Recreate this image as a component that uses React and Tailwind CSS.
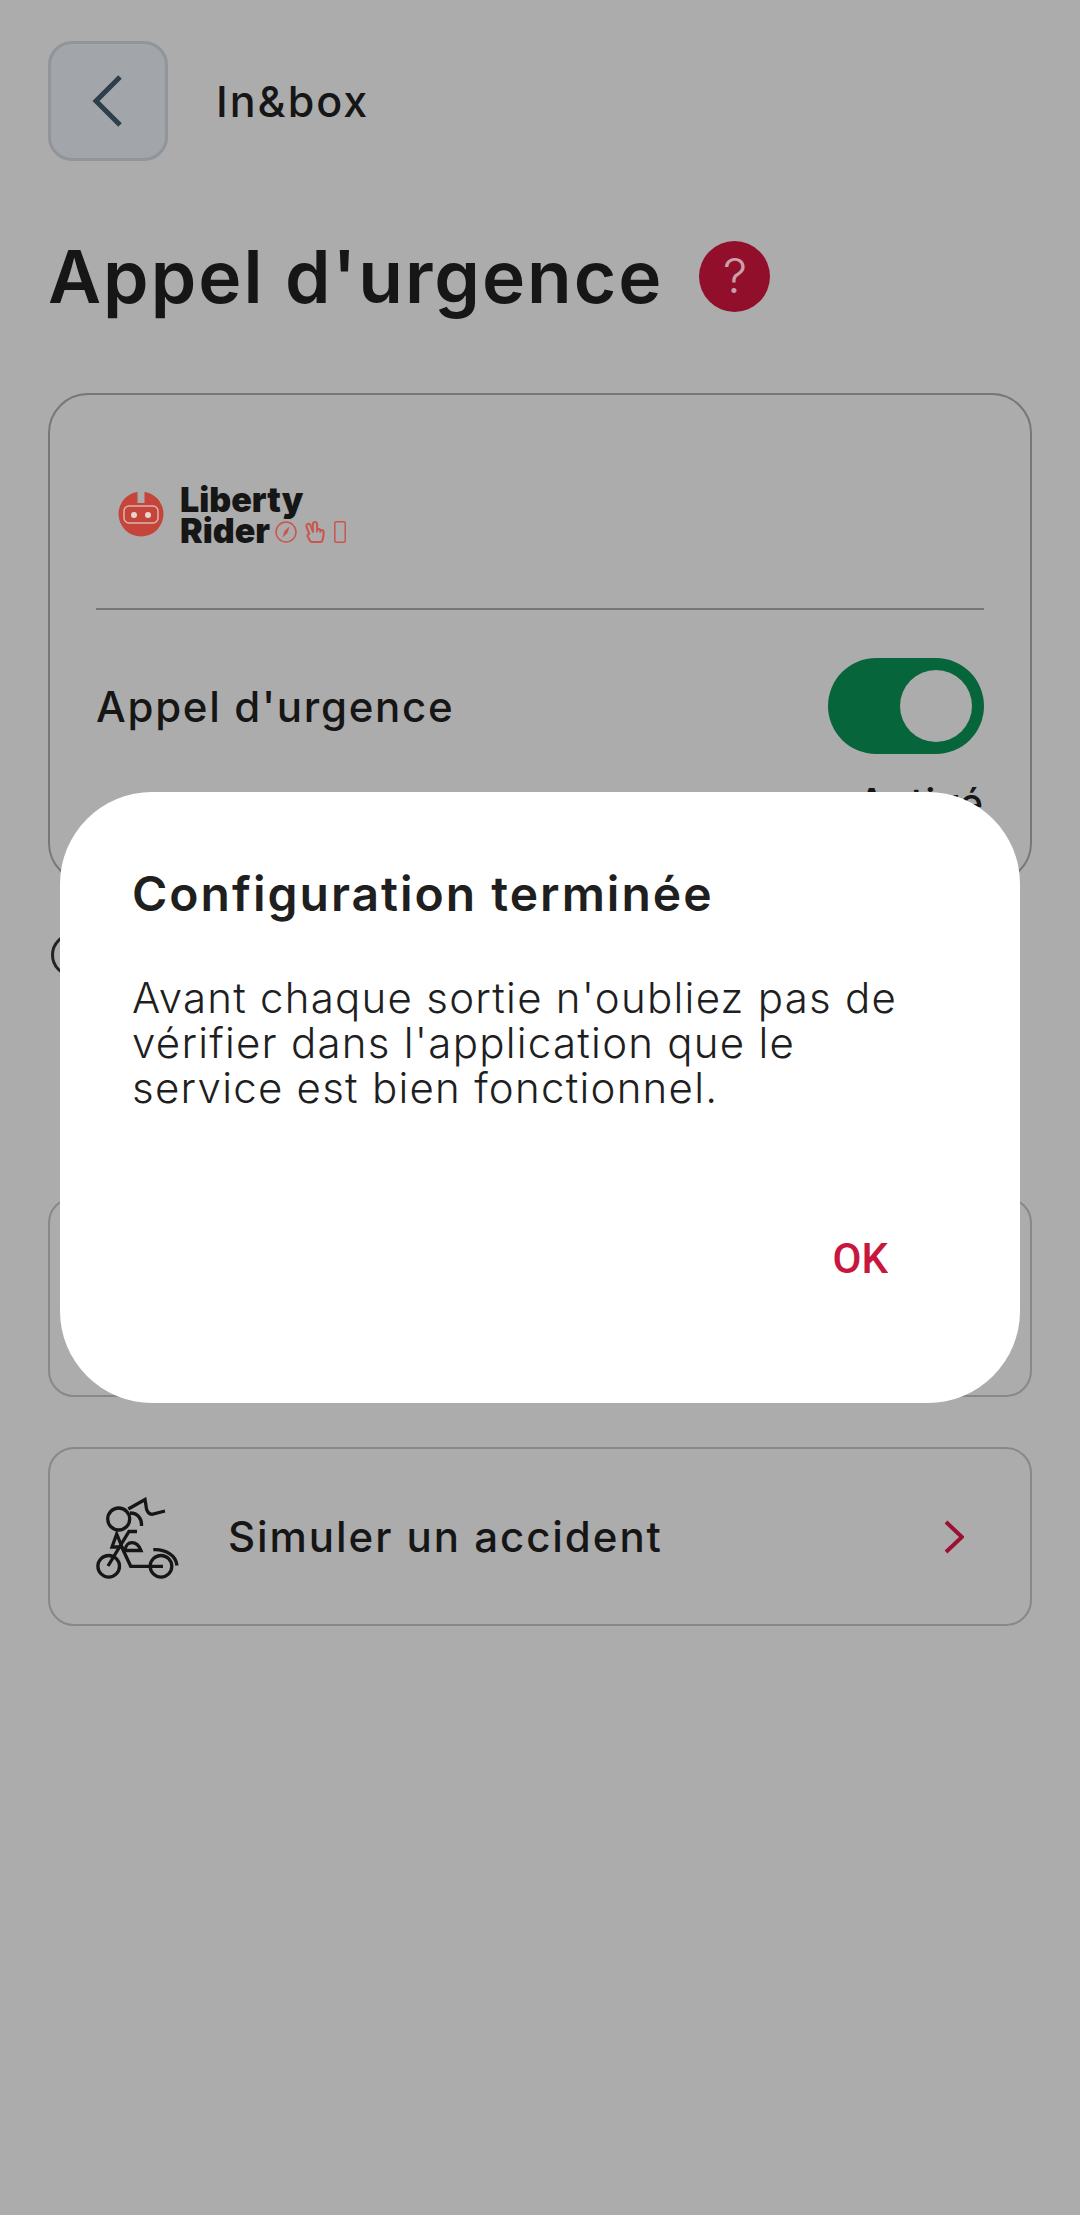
import { FaRegHandPeace } from "react-icons/fa";

const font = { fontFamily: "Inter, 'Noto Sans', sans-serif" };

const BikerIcon = () => (
  <svg width="84" height="84" viewBox="56 56 84 84" fill="none" stroke="#161616" strokeWidth="3.3" className="mt-[4px]">
    <circle cx="68.7" cy="125.3" r="10.8" />
    <circle cx="121" cy="125.3" r="10.8" />
    <circle cx="78.7" cy="78" r="11" />
    <path d="M113.3 108.7C125 108 136 114 137 124.5" />
    <path d="M68 125L89 90.5H97" />
    <path d="M81.7 106L90.7 125.3H123" />
    <path d="M85 109.5C86 99 97 99 101 109.5Z" />
    <path d="M76.7 93L72 106H82Z" />
    <path d="M88.3 68L105 58.5L106.5 68Q108 73 112 73.3L125 70" />
    <path d="M90 72C98 72 102 78 101.5 85" />
  </svg>
);

const LibertyLogo = () => (
  <div className="flex items-start gap-[16px]">
    <svg width="46" height="46" viewBox="0 0 46 46" className="mt-[7px]">
      <circle cx="23" cy="23" r="22.5" fill="#c6453b" />
      <path d="M19.5 0V12H26.5V0Z" fill="#acacac" />
      <rect x="6" y="15" width="34" height="17" rx="5" fill="#c6453b" stroke="#d9b5b0" strokeWidth="1.5" />
      <circle cx="16" cy="24" r="3" fill="#e8d5d2" />
      <circle cx="30" cy="24" r="3" fill="#e8d5d2" />
    </svg>
    <div className="text-[34px] leading-[31px] font-black text-[#161616]">
      <div>Liberty</div>
      <div className="flex items-center">
        Rider
        <svg width="22" height="22" viewBox="0 0 22 22" className="ml-[5px] mt-[2px]" fill="none" stroke="#c9554c" strokeWidth="1.5">
          <circle cx="11" cy="11" r="10" />
          <path d="M14.5 5.5L12.5 12L7.5 16.5L9.5 10Z" fill="#c9554c" stroke="none" />
        </svg>
        <FaRegHandPeace className="ml-[7px] mt-[2px] text-[#c9554c]" size={22} />
        <svg width="12" height="22" viewBox="0 0 12 22" className="ml-[8px] mt-[2px]" fill="none" stroke="#c9554c" strokeWidth="1.5">
          <rect x="0.8" y="0.8" width="10.4" height="20.4" rx="1.5" />
        </svg>
      </div>
    </div>
  </div>
);

export default function App() {
  return (
    <div className="relative w-[1080px] h-[2215px] overflow-hidden bg-[#acacac] text-[#161616]" style={font}>
      <div className="px-12">
        {/* Header */}
        <div className="flex items-center gap-12 pt-[41px]">
          <div className="w-[120px] h-[120px] flex items-center justify-center rounded-[24px] border-[3px] border-[#90959a] bg-[#a2a6aa]">
            <svg width="32" height="52" viewBox="0 0 32 52" fill="none" stroke="#2d3f4b" strokeWidth="5">
              <path d="M28 2L4 26L28 50" />
            </svg>
          </div>
          <span className="text-[43px] font-medium tracking-[2px]">In&amp;box</span>
        </div>

        {/* Title */}
        <div className="flex items-center gap-[36px] mt-[79px] h-[72px]">
          <h1 className="text-[73px] font-semibold tracking-[2px] leading-none">Appel d'urgence</h1>
          <div className="w-[71px] h-[71px] rounded-full bg-[#920f2c] flex items-center justify-center text-[#c9a0aa] text-[48px] font-light">
            ?
          </div>
        </div>

        {/* Main card */}
        <div className="mt-[81px] h-[490px] rounded-[40px] border-2 border-[#777777] px-[46px]">
          <div className="h-[215px] border-b-2 border-[#777777] pt-[89px] pl-[22px]">
            <LibertyLogo />
          </div>
          <div className="flex items-center justify-between mt-[48px]">
            <span className="text-[42px] font-medium tracking-[1.7px]">Appel d'urgence</span>
            <div className="w-[156px] h-[96px] rounded-full bg-[#06653a] flex items-center justify-end pr-[12px]">
              <div className="w-[72px] h-[72px] rounded-full bg-[#acacac]" />
            </div>
          </div>
          <div className="text-right text-[40px] font-medium tracking-[1px] mt-[19px]">Activé</div>
        </div>

        <div className="mt-[50px] ml-[3px] w-[44px] h-[44px] rounded-full border-[3px] border-[#222222]" />

        {/* Hidden card, behind the dialog */}
        <div className="mt-[220px] h-[200px] rounded-[26px] border-2 border-[#888888]" />

        {/* Simulate card */}
        <div className="mt-[50px] h-[179px] rounded-[26px] border-2 border-[#888888] flex items-center pl-[46px] pr-[66px]">
          <BikerIcon />
          <span className="ml-[48px] text-[42px] font-medium tracking-[1.95px] flex-1">Simuler un accident</span>
          <svg width="20" height="34" viewBox="0 0 20 34" fill="none" stroke="#9a1230" strokeWidth="4">
            <path d="M2 2L18 17L2 32" />
          </svg>
        </div>
      </div>

      {/* Dialog */}
      <div className="absolute inset-0 flex justify-center items-start pt-[792px]">
        <div className="w-[960px] h-[611px] rounded-[92px] bg-white px-[72px] pt-[72px] text-[#1f1f1f]">
          <h2 className="text-[48px] font-semibold tracking-[2px] leading-[60px]">Configuration terminée</h2>
          <p className="mt-[51px] text-[42px] font-light tracking-[1.25px] leading-[45px]">
            Avant chaque sortie n'oubliez pas de<br />
            vérifier dans l'application que le<br />
            service est bien fonctionnel.
          </p>
          <div className="flex justify-end mt-[128px] pr-[60px]">
            <span className="text-[42px] font-medium text-[#c8173f] leading-none" style={{ fontFamily: "Roboto, sans-serif" }}>OK</span>
          </div>
        </div>
      </div>
    </div>
  );
}
